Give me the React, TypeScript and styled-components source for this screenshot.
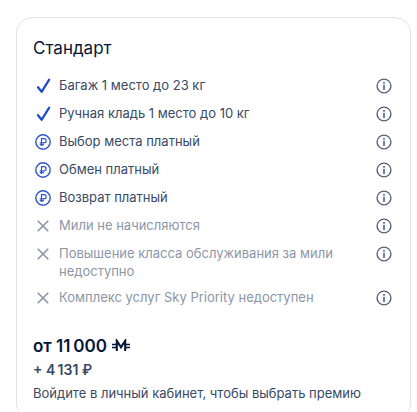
import React from "react";
import styled, { createGlobalStyle } from "styled-components";

const GlobalStyle = createGlobalStyle`
  * { box-sizing: border-box; }
  body {
    margin: 0;
    background: #fff;
    font-family: Inter, "Noto Sans", sans-serif;
    color: #394966;
  }
`;

const Page = styled.main`
  height: 100vh;
  overflow: hidden;
  padding: 17px 6px 0 16px;
`;

const Card = styled.section`
  border: 1px solid #e1e2e5;
  border-radius: 16px;
  padding: 18px 16px 16px;
`;

const Title = styled.h2`
  margin: 0 0 16px;
  font-size: 17px;
  line-height: 24px;
  font-weight: 400;
  color: #061639;
`;

const List = styled.ul`
  list-style: none;
  margin: 0;
  padding: 0;
  display: flex;
  flex-direction: column;
  gap: 8px;
`;

const Row = styled.li<{ $muted: boolean }>`
  display: flex;
  align-items: flex-start;
  min-height: 20px;
  font-size: 13px;
  line-height: 18px;
  color: ${(p) => (p.$muted ? "#8c96a8" : "#394966")};
`;

const Label = styled.span`
  flex: 1;
  padding: 0 16px 0 6px;
`;

const Icon = styled.svg`
  display: block;
  flex: none;
  width: 20px;
  height: 20px;
  fill: none;
`;

const InfoButton = styled.button`
  flex: none;
  width: 20px;
  height: 20px;
  padding: 0;
  border: 0;
  background: none;
  color: #53617c;
  cursor: pointer;
`;

const Price = styled.div`
  display: flex;
  align-items: center;
  gap: 5px;
  margin-top: 26px;
  font-size: 17px;
  line-height: 24px;
  font-weight: 600;
  color: #061639;
`;

const Tax = styled.div`
  font-size: 14px;
  line-height: 24px;
  font-weight: 600;
`;

const Note = styled.p`
  margin: 1px 0 0;
  font-size: 13px;
  line-height: 20px;
`;

type Kind = "included" | "paid" | "unavailable";

const services: { kind: Kind; text: string }[] = [
  { kind: "included", text: "Багаж 1 место до 23 кг" },
  { kind: "included", text: "Ручная кладь 1 место до 10 кг" },
  { kind: "paid", text: "Выбор места платный" },
  { kind: "paid", text: "Обмен платный" },
  { kind: "paid", text: "Возврат платный" },
  { kind: "unavailable", text: "Мили не начисляются" },
  { kind: "unavailable", text: "Повышение класса обслуживания за мили недоступно" },
  { kind: "unavailable", text: "Комплекс услуг Sky Priority недоступен" },
];

function StatusIcon({ kind }: { kind: Kind }) {
  if (kind === "included") {
    return (
      <Icon viewBox="0 0 20 20" aria-hidden="true">
        <path d="M5 11.2 8.6 15.8 16.2 3.6" stroke="#1d4bc6" strokeWidth="2.2" strokeLinecap="round" strokeLinejoin="round" />
      </Icon>
    );
  }
  if (kind === "paid") {
    return (
      <Icon viewBox="0 0 20 20" aria-hidden="true" stroke="#2f55cc">
        <circle cx="10" cy="10" r="7.2" strokeWidth="1.4" />
        <path d="M8.5 14V6.6H11a2.1 2.1 0 0 1 0 4.2H6.7M6.7 12.6H11" strokeWidth="1.2" />
      </Icon>
    );
  }
  return (
    <Icon viewBox="0 0 20 20" aria-hidden="true">
      <path d="M5.2 5.2 14.8 14.8M14.8 5.2 5.2 14.8" stroke="#8c96a8" strokeWidth="1.6" strokeLinecap="round" />
    </Icon>
  );
}

function InfoIcon() {
  return (
    <Icon viewBox="0 0 20 20" aria-hidden="true">
      <circle cx="10" cy="10" r="6.9" stroke="currentColor" strokeWidth="1.4" />
      <path d="M9.2 6.1h1.6v1.6H9.2zM9.2 8.8h1.6V14H9.2z" fill="currentColor" />
    </Icon>
  );
}

const MilesIcon = styled.svg`
  width: 18px;
  height: 14px;
  fill: none;
  stroke: #061639;
`;

export default function App() {
  return (
    <>
      <GlobalStyle />
      <Page>
        <Card>
          <Title>Стандарт</Title>
          <List>
            {services.map(({ kind, text }) => (
              <Row key={text} $muted={kind === "unavailable"}>
                <StatusIcon kind={kind} />
                <Label>{text}</Label>
                <InfoButton type="button" aria-label={`Подробнее: ${text}`}>
                  <InfoIcon />
                </InfoButton>
              </Row>
            ))}
          </List>
          <Price>
            <span>от 11{"\u2009"}000</span>
            <MilesIcon viewBox="0 0 18 14" role="img" aria-label="миль">
              <path d="M4.8 12V1.8L9 8.4 13.2 1.8V12" strokeWidth="2.1" />
              <path d="M0 5.5h4.5M0 8.5h4.5M13.5 5.5H18M13.5 8.5H18" strokeWidth="1.3" />
            </MilesIcon>
          </Price>
          <Tax>+ 4{"\u2009"}131 ₽</Tax>
          <Note>Войдите в личный кабинет, чтобы выбрать премию</Note>
        </Card>
      </Page>
    </>
  );
}
